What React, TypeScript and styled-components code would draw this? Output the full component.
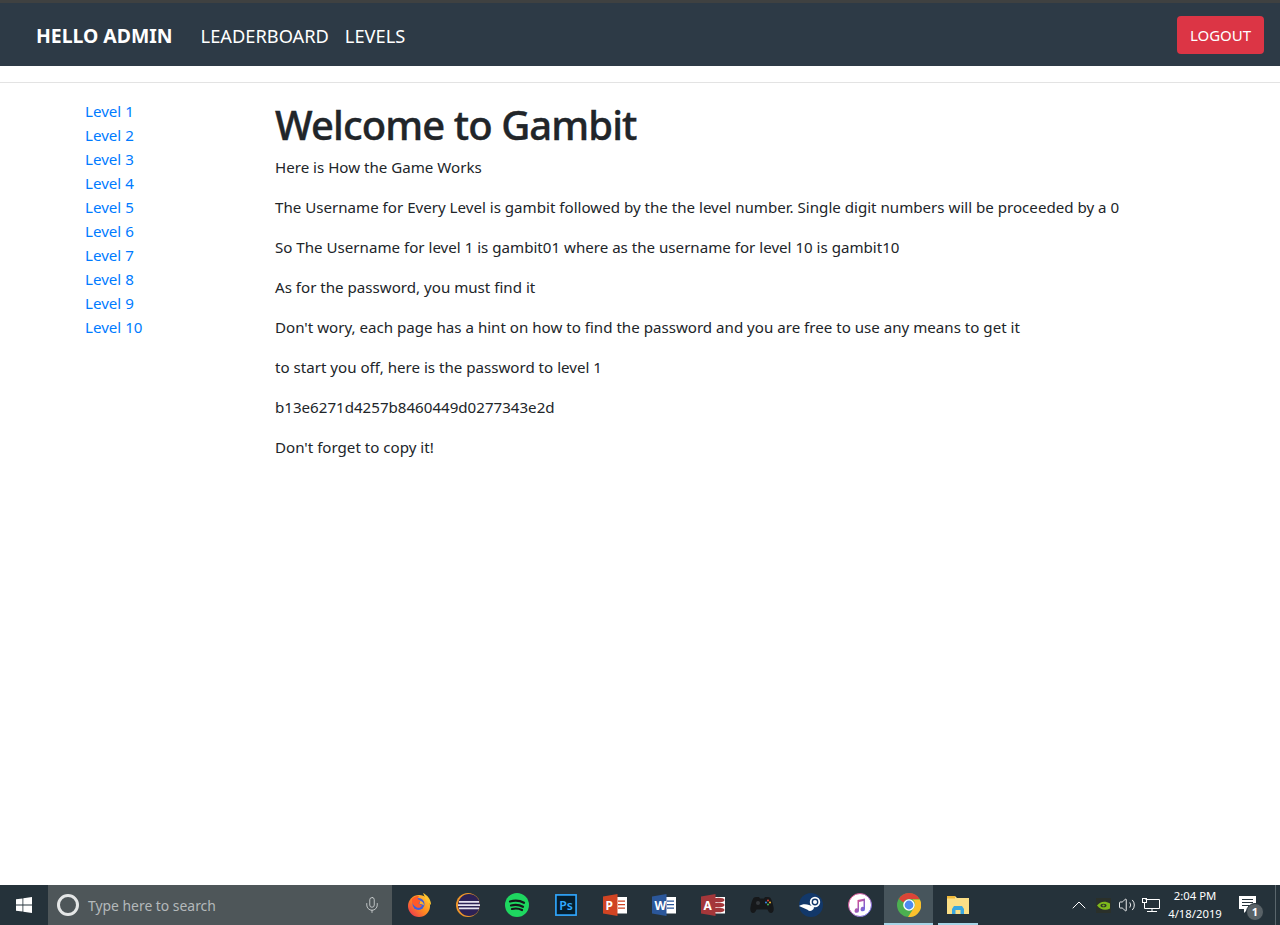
import React from 'react';
import styled, { createGlobalStyle } from 'styled-components';
import { Mic, ChevronUp, Volume2 } from 'lucide-react';

const Global = createGlobalStyle`
  html, body { margin: 0; padding: 0; background: #fff; }
  body { font-family: "Noto Sans", "Open Sans", sans-serif; color: #212529; }
`;

const Page = styled.div`
  display: flex;
  flex-direction: column;
  height: 925px;
  overflow: hidden;
`;

const TopStrip = styled.div`
  height: 3px;
  background: #3f4141;
`;

const Nav = styled.nav`
  height: 63px;
  background: #2d3a46;
  display: flex;
  align-items: center;
  padding: 0 16px 0 36px;
  color: #fff;
`;

const Brand = styled.a`
  font-size: 19.4px;
  font-weight: 700;
  margin-right: 28px;
  padding-top: 2px;
`;

const NavLink = styled.a`
  font-size: 18.25px;
  margin-right: 16px;
  padding-top: 2px;
`;

const LogoutButton = styled.button`
  margin-left: auto;
  width: 87px;
  height: 38px;
  border: 0;
  border-radius: 4px;
  background: #dc3545;
  color: #fff;
  font: 15px "Noto Sans", sans-serif;
`;

const Rule = styled.hr`
  border: 0;
  height: 1px;
  background: #e3e3e3;
  margin: 16px 0 0;
`;

const Body = styled.div`
  flex: 1;
  display: flex;
  padding-top: 16px;
`;

const Sidebar = styled.ul`
  list-style: none;
  margin: 0;
  padding: 0 0 0 85px;
  width: 190px;
  flex: none;
`;

const LevelLink = styled.li`
  color: #007bff;
  font-size: 15.12px;
  line-height: 24px;
`;

const Main = styled.main`
  flex: 1;
`;

const Title = styled.h1`
  margin: 2px 0 6px;
  font-size: 40px;
  font-weight: 500;
  letter-spacing: -0.9px;
  -webkit-text-stroke: 0.4px #212529;
  line-height: 48px;
`;

const Para = styled.p`
  margin: 0 0 16px;
  font-size: 15.12px;
  line-height: 24px;
`;

const Taskbar = styled.div`
  height: 40px;
  background: #25323a;
  display: flex;
  align-items: center;
  flex: none;
`;

const StartButton = styled.div`
  width: 48px;
  height: 40px;
  display: flex;
  align-items: center;
  justify-content: center;
`;

const SearchBox = styled.div`
  width: 344px;
  height: 40px;
  background: #4e5659;
  display: flex;
  align-items: center;
  padding: 0 11px 0 9px;
  box-sizing: border-box;
  color: #b4b9bb;
  font-size: 13.9px;
`;

const SearchRing = styled.span`
  width: 16px;
  height: 16px;
  border: 3px solid #e4e6e6;
  border-radius: 50%;
  margin-right: 9px;
`;

const SearchLabel = styled.span`
  flex: 1;
`;

const AppRow = styled.div`
  display: flex;
  padding-left: 2px;
`;

const AppSlot = styled.div<{ $active?: boolean; $open?: boolean }>`
  position: relative;
  width: 49px;
  height: 40px;
  display: flex;
  align-items: center;
  justify-content: center;
  background: ${p => (p.$active ? '#47555c' : 'transparent')};

  &::after {
    content: "";
    display: ${p => (p.$open ? 'block' : 'none')};
    position: absolute;
    left: ${p => (p.$active ? '0' : '5px')};
    right: ${p => (p.$active ? '0' : '4px')};
    bottom: 0;
    height: 2px;
    background: #a6d4e6;
  }
`;

const Tray = styled.div`
  margin-left: auto;
  display: flex;
  align-items: center;
  color: #fff;
`;

const TrayIcon = styled.span`
  display: flex;
  width: 24px;
  justify-content: center;
`;

const Clock = styled.div`
  width: 64px;
  text-align: center;
  font-size: 11.3px;
  line-height: 18px;
  color: #fff;
`;

const Notify = styled.div`
  position: relative;
  width: 48px;
  height: 40px;
  display: flex;
  align-items: center;
  padding-left: 12px;
  box-sizing: border-box;
`;

const NotifyBadge = styled.span`
  position: absolute;
  left: 19px;
  top: 18px;
  width: 16px;
  height: 16px;
  border-radius: 50%;
  background: #596267;
  border: 1px solid #25323a;
  color: #fff;
  font-size: 11px;
  font-weight: 700;
  line-height: 16px;
  text-align: center;
`;

const ShowDesktop = styled.div`
  width: 5px;
  height: 40px;
  box-sizing: border-box;
  border-left: 1px solid #5a666c;
`;

const Ico: React.FC<{ children: React.ReactNode; size?: number }> = ({ children, size = 24 }) => (
  <svg width={size} height={size} viewBox="0 0 24 24">{children}</svg>
);

const Firefox = () => (
  <Ico>
    <defs>
      <linearGradient id="fox" x1="1" y1="0" x2="0" y2="1">
        <stop offset="0" stopColor="#ffd23a" />
        <stop offset=".5" stopColor="#ff8a1f" />
        <stop offset="1" stopColor="#e8265a" />
      </linearGradient>
    </defs>
    <circle cx="12" cy="13" r="11" fill="url(#fox)" />
    <path d="M16 0c4 2 8 6 8 12l-5-5z" fill="#ffc52f" />
    <circle cx="11.500" cy="11" r="6" fill="#3d5fe0" />
    <path d="M5 6c2-2.500 5-3.500 7-3l-1.500 3 3 1.500-2 3 3.500 2c-1 2.500-4 3-6 1.500C6 12.500 4.500 9 5 6z" fill="#ff5a2a" />
    <path d="M13 8c2 0 4 2 4 4.500-1-1-2.500-1.500-4.500-1.500z" fill="#ffb02a" />
  </Ico>
);

const Eclipse = () => (
  <Ico>
    <circle cx="12" cy="12" r="12" fill="#f0962a" />
    <circle cx="13" cy="12" r="11" fill="#2c2255" />
    <path d="M3 8h20v1.800H3zM2 11.200h22v1.800H2zM3 14.400h20v1.800H3z" fill="#e6e2f0" />
  </Ico>
);

const Spotify = () => (
  <Ico>
    <circle cx="12" cy="12" r="12" fill="#1ed760" />
    <path d="M5 8.500c5-1.500 10-1 14 1.300M6 12.500c4-1.200 8.500-.7 12 1.300M7 16c3.500-.9 7-.5 10 1" stroke="#16181a" strokeWidth="2.200" fill="none" strokeLinecap="round" />
  </Ico>
);

const Photoshop = () => (
  <Ico size={22}>
    <rect x="1" y="1" width="22" height="22" fill="#061e2e" stroke="#31a8ff" strokeWidth="1.800" />
    <text x="4.500" y="17" fontSize="13.500" fontWeight="600" fill="#31a8ff" fontFamily="Noto Sans">Ps</text>
  </Ico>
);

const Office: React.FC<{ color: string; letter: string; access?: boolean }> = ({ color, letter, access }) => (
  <Ico>
    <rect x="10" y="4" width="14" height="16.500" fill="#fff" />
    {access ? (
      <g fill={color}>
        <ellipse cx="17.500" cy="7" rx="6" ry="2.300" />
        <ellipse cx="17.500" cy="12" rx="6" ry="2.300" />
        <ellipse cx="17.500" cy="17" rx="6" ry="2.300" />
      </g>
    ) : (
      <path d="M15 7.500h7v1.300h-7zM15 11h7v1.300h-7zM15 14.500h7v1.300h-7z" fill={color} />
    )}
    <path d="M0 3.500L14.500 1v22L0 20.500z" fill={color} />
    <text x="2.500" y="17" fontSize="12" fontWeight="700" fill="#fff" fontFamily="Noto Sans">{letter}</text>
  </Ico>
);

const Gamepad = () => (
  <Ico>
    <path d="M6 4h3l1 1.500h4L15 4h3c3 0 4 3 5.500 10 .8 4-.8 6-2.500 6-1.500 0-2.500-1-3.500-3.500h-11C5.500 19 4.500 20 3 20c-1.700 0-3.300-2-2.500-6C2 7 3 4 6 4z" fill="#16181a" />
    <circle cx="18" cy="7.500" r="1" fill="#e8433a" />
    <circle cx="20" cy="9.500" r="1" fill="#f2b632" />
    <circle cx="16" cy="9.500" r="1" fill="#3a8be8" />
    <circle cx="18" cy="11.500" r="1" fill="#49b85a" />
    <circle cx="8" cy="10" r="2" fill="#34383b" />
  </Ico>
);

const Steam = () => (
  <Ico>
    <circle cx="12" cy="12" r="12" fill="#12386a" />
    <path d="M0 13l8.500 3.800a3.800 3.800 0 0 0 6.500-3l-5-1.800c-3-1-7-1-10 1z" fill="#fff" />
    <circle cx="16" cy="9" r="4.300" fill="none" stroke="#fff" strokeWidth="1.800" />
    <circle cx="16" cy="9" r="2" fill="#fff" />
  </Ico>
);

const Itunes = () => (
  <Ico>
    <defs>
      <linearGradient id="tune" x1="0" y1="0" x2="1" y2="1">
        <stop offset="0" stopColor="#f2487a" />
        <stop offset="1" stopColor="#5a6cf0" />
      </linearGradient>
    </defs>
    <circle cx="12" cy="12" r="11.500" fill="#fff" stroke="url(#tune)" strokeWidth="1" />
    <path d="M9.500 7L17 5.500v10.500a2.200 2.200 0 1 1-1.500-2V8l-4.500 1v8.500a2.200 2.200 0 1 1-1.500-2z" fill="url(#tune)" />
  </Ico>
);

const Chrome = () => (
  <Ico>
    <circle cx="12" cy="12" r="12" fill="#4caf50" />
    <path d="M1.800 6a12 12 0 0 1 20.800 0H12a6 6 0 0 0-5.500 3.500z" fill="#db4437" />
    <path d="M22.800 6.500A12 12 0 0 1 11 24l5.500-8.500a6 6 0 0 0-1-9z" fill="#fbc02d" />
    <circle cx="12" cy="12" r="5.800" fill="#fff" />
    <circle cx="12" cy="12" r="4.400" fill="#4d8bf0" />
  </Ico>
);

const Explorer = () => (
  <Ico>
    <path d="M1 3h8l2 2h12v16H1z" fill="#fbdf86" />
    <path d="M1 3h8v2.500H1z" fill="#f0b93a" />
    <path d="M6 21v-5l2-3h8l2 3v5h-3.500v-4h-5v4z" fill="#3aa7e0" />
  </Ico>
);

const Nvidia = () => (
  <svg width="15" height="15" viewBox="0 0 15 15">
    <rect width="15" height="15" fill="#2a302a" />
    <path d="M1 7.500c3-4 8-5 13-2v5c-4 2-9 2-13-3z" fill="#7fb81c" />
    <ellipse cx="7.500" cy="7.500" rx="3" ry="1.800" fill="#2a302a" />
    <ellipse cx="7.500" cy="7.500" rx="1.300" ry=".9" fill="#7fb81c" />
  </svg>
);

const Windows = () => (
  <svg width="16" height="16" viewBox="0 0 16 16" fill="#fff">
    <path d="M0 2.300l6.500-.9v6.200H0zM7.300 1.300L16 0v7.600H7.300zM0 8.400h6.500v6.200L0 13.700zM7.300 8.400H16V16l-8.700-1.300z" />
  </svg>
);

const Monitor = () => (
  <svg width="18" height="15" viewBox="0 0 18 15" fill="none" stroke="#fff" strokeWidth="1">
    <path d="M3.500 1.500h14v9h-14M10 10.500v3M5 13.500h10" />
    <rect x=".5" y=".5" width="4" height="4" />
    <path d="M2.500 4.500v6h2" />
  </svg>
);

const Bubble = () => (
  <svg width="17" height="18" viewBox="0 0 17 18">
    <path d="M0 0h17v13H9l-4 4v-4H0z" fill="#fff" />
    <path d="M3 3.500h11M3 6.500h11M3 9.500h7" stroke="#25323a" strokeWidth="1" />
  </svg>
);

const levels = Array.from({ length: 10 }, (_, i) => `Level ${i + 1}`);

const paragraphs = [
  'Here is How the Game Works',
  'The Username for Every Level is gambit followed by the the level number. Single digit numbers will be proceeded by a 0',
  'So The Username for level 1 is gambit01 where as the username for level 10 is gambit10',
  'As for the password, you must find it',
  "Don't wory, each page has a hint on how to find the password and you are free to use any means to get it",
  'to start you off, here is the password to level 1',
  'b13e6271d4257b8460449d0277343e2d',
  "Don't forget to copy it!",
];

const App = () => (
  <Page>
    <Global />
    <TopStrip />
    <Nav>
      <Brand>HELLO ADMIN</Brand>
      <NavLink>LEADERBOARD</NavLink>
      <NavLink>LEVELS</NavLink>
      <LogoutButton>LOGOUT</LogoutButton>
    </Nav>
    <Rule />
    <Body>
      <Sidebar>
        {levels.map(l => <LevelLink key={l}>{l}</LevelLink>)}
      </Sidebar>
      <Main>
        <Title>Welcome to Gambit</Title>
        {paragraphs.map(p => <Para key={p}>{p}</Para>)}
      </Main>
    </Body>
    <Taskbar>
      <StartButton><Windows /></StartButton>
      <SearchBox>
        <SearchRing />
        <SearchLabel>Type here to search</SearchLabel>
        <Mic size={18} strokeWidth={1.1} color="#d5d8d9" />
      </SearchBox>
      <AppRow>
        <AppSlot><Firefox /></AppSlot>
        <AppSlot><Eclipse /></AppSlot>
        <AppSlot><Spotify /></AppSlot>
        <AppSlot><Photoshop /></AppSlot>
        <AppSlot><Office color="#d04423" letter="P" /></AppSlot>
        <AppSlot><Office color="#2b579a" letter="W" /></AppSlot>
        <AppSlot><Office color="#a4373a" letter="A" access /></AppSlot>
        <AppSlot><Gamepad /></AppSlot>
        <AppSlot><Steam /></AppSlot>
        <AppSlot><Itunes /></AppSlot>
        <AppSlot $active $open><Chrome /></AppSlot>
        <AppSlot $open><Explorer /></AppSlot>
      </AppRow>
      <Tray>
        <TrayIcon><ChevronUp size={24} strokeWidth={1} /></TrayIcon>
        <TrayIcon><Nvidia /></TrayIcon>
        <TrayIcon><Volume2 size={18} strokeWidth={1.2} /></TrayIcon>
        <TrayIcon><Monitor /></TrayIcon>
        <Clock>2:04 PM<br />4/18/2019</Clock>
        <Notify>
          <Bubble />
          <NotifyBadge>1</NotifyBadge>
        </Notify>
        <ShowDesktop />
      </Tray>
    </Taskbar>
  </Page>
);

export default App;
